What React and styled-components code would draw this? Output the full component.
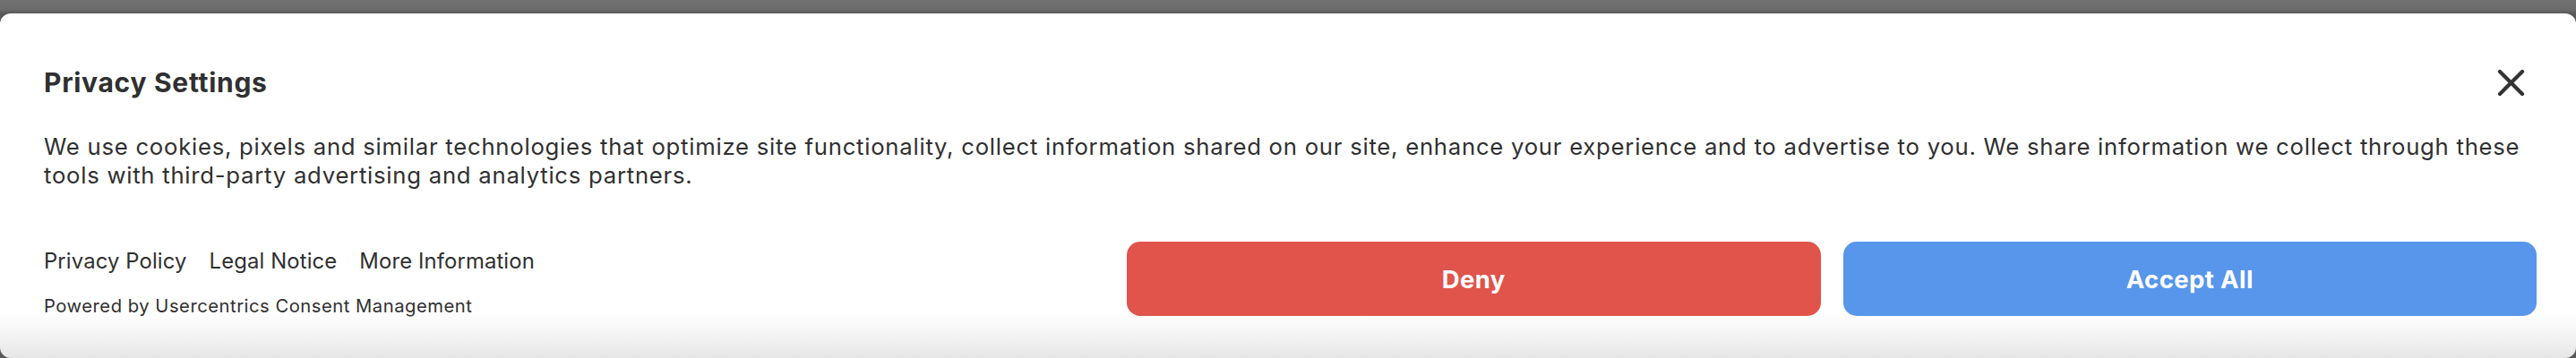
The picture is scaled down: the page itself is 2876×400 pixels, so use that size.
import React from 'react';
import styled, { createGlobalStyle } from 'styled-components';

const GlobalStyle = createGlobalStyle`
  html, body {
    margin: 0;
    padding: 0;
    background: #6e6e6e;
  }
  body {
    font-family: Inter, "Noto Sans", "Liberation Sans", sans-serif;
    -webkit-font-smoothing: antialiased;
  }
`;

const Backdrop = styled.div`
  width: 100%;
  height: 400px;
  box-sizing: border-box;
  padding-top: 15px;
  background: linear-gradient(to bottom, #727272 0, #6a6a6a 11px, #585858 15px);
  overflow: hidden;
`;

const Banner = styled.div`
  height: 385px;
  box-sizing: border-box;
  padding: 59px 44px 0 49px;
  border-radius: 12px;
  background: linear-gradient(to bottom, #ffffff 0, #ffffff 335px, #f6f6f6 355px, #e6e6e6 385px);
  color: #303030;
  display: flex;
  flex-direction: column;
`;

const Header = styled.div`
  display: flex;
  align-items: center;
  justify-content: space-between;
  height: 36px;
`;

const Title = styled.h2`
  margin: 0;
  font-size: 30px;
  line-height: 36px;
  font-weight: 700;
  letter-spacing: 0.7px;
`;

const CloseButton = styled.button`
  display: flex;
  align-items: center;
  justify-content: center;
  width: 31px;
  height: 31px;
  margin-right: 13px;
  padding: 0;
  border: none;
  background: none;
  color: #333333;
  cursor: pointer;
`;

const Message = styled.p`
  margin: 38px 0 0;
  font-size: 25.7px;
  line-height: 32px;
  font-weight: 400;
  letter-spacing: 0.75px;
`;

const Footer = styled.div`
  display: flex;
  align-items: flex-start;
  justify-content: space-between;
  margin-top: 58px;
`;

const Meta = styled.div`
  display: flex;
  flex-direction: column;
  gap: 22px;
  padding-top: 7px;
`;

const Links = styled.nav`
  display: flex;
  gap: 25px;
`;

const FooterLink = styled.a`
  font-size: 23.8px;
  line-height: 30px;
  letter-spacing: 0.15px;
  color: #303030;
  text-decoration: none;
  cursor: pointer;
`;

const Powered = styled.div`
  font-size: 20.2px;
  line-height: 26px;
  letter-spacing: 0.53px;
  color: #303030;
`;

const Actions = styled.div`
  display: flex;
  gap: 25px;
  width: 1574px;
`;

const ActionButton = styled.button`
  flex: 1;
  height: 83px;
  border: none;
  border-radius: 15px;
  background: ${({ $tone }) => ($tone === 'deny' ? '#e0544c' : '#5796eb')};
  color: #ffffff;
  font-family: inherit;
  font-size: 27.5px;
  font-weight: 700;
  letter-spacing: 0.4px;
  cursor: pointer;
`;

const CloseIcon = () => (
  <svg width="31" height="31" viewBox="0 0 31 31" fill="none">
    <path d="M3 3L28 28M28 3L3 28" stroke="currentColor" strokeWidth="4.2" strokeLinecap="round" />
  </svg>
);

const App = () => {
  return (
    <>
      <GlobalStyle />
      <Backdrop>
        <Banner>
          <Header>
            <Title>Privacy Settings</Title>
            <CloseButton aria-label="Close">
              <CloseIcon />
            </CloseButton>
          </Header>
          <Message>
            We use cookies, pixels and similar technologies that optimize site functionality, collect information shared on our site, enhance your experience and to advertise to you. We share information we collect through these tools with third-party advertising and analytics partners.
          </Message>
          <Footer>
            <Meta>
              <Links>
                <FooterLink>Privacy Policy</FooterLink>
                <FooterLink>Legal Notice</FooterLink>
                <FooterLink>More Information</FooterLink>
              </Links>
              <Powered>Powered by Usercentrics Consent Management</Powered>
            </Meta>
            <Actions>
              <ActionButton $tone="deny">Deny</ActionButton>
              <ActionButton $tone="accept">Accept All</ActionButton>
            </Actions>
          </Footer>
        </Banner>
      </Backdrop>
    </>
  );
};

export default App;
